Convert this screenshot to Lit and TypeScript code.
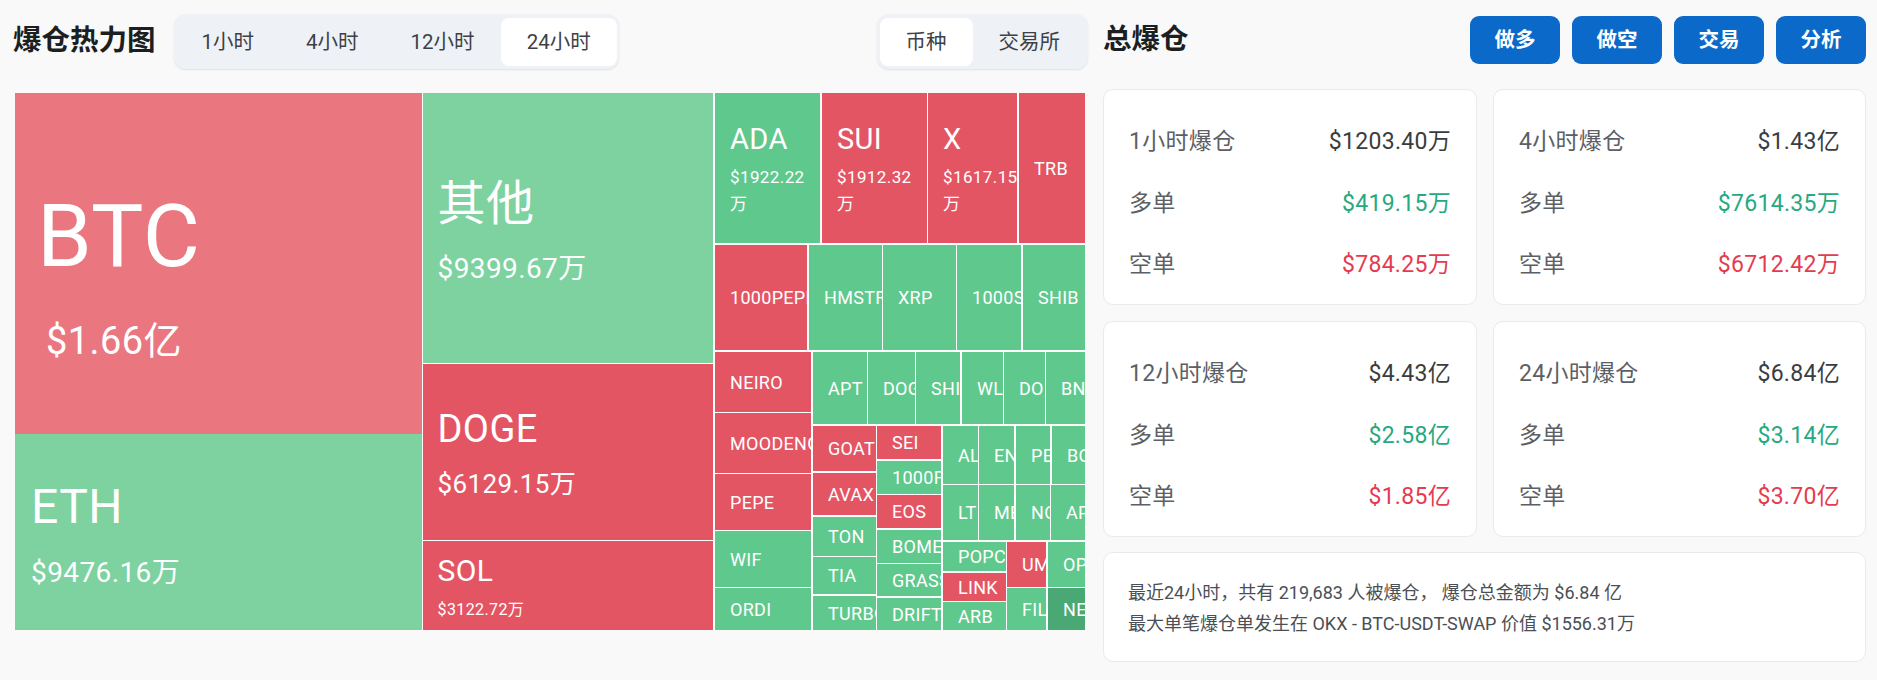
import { LitElement, html, css, nothing } from 'lit';
import { customElement } from 'lit/decorators.js';

const RED = '#e45564';
const GREEN = '#5fc88c';
const SOFT_RED = '#ea7680';
const SOFT_GREEN = '#7dd2a0';
const DARK_GREEN = '#4aa874';

interface Big {
  lf: number; // label font
  vf: number; // value font
  top: number; // label centre from the tile's top
  vtop: number; // value centre from the tile's top
  value: string;
  left?: number;
  vleft?: number;
  lh?: number;
}

interface Tile {
  name: string;
  size: number;
  gap: number;
  color: string;
  big?: Big;
}

interface Group {
  dir: 'row' | 'col';
  size: number;
  gap: number;
  items: Node[];
}

type Node = Tile | Group;

const t = (name: string, color: string, size: number, gap = 1, big?: Big): Tile => ({ name, color, size, gap, big });
const row = (size: number, gap: number, ...items: Node[]): Group => ({ dir: 'row', size, gap, items });
const col = (size: number, gap: number, ...items: Node[]): Group => ({ dir: 'col', size, gap, items });

const bigTile = (lf: number, vf: number, top: number, vtop: number, value: string, left = 15, vleft = left, lh = vf): Big => ({
  lf, vf, top, vtop, value, left, vleft, lh,
});

const TREE: Group = row(537, 0,
  col(406.5, 1,
    t('BTC', SOFT_RED, 341, 0, bigTile(88, 38, 143, 248, '$1.66亿', 22, 31)),
    t('ETH', SOFT_GREEN, 196, 0, bigTile(48, 28, 73, 139, '$9476.16万', 16, 16)),
  ),
  col(290.5, 2,
    t('其他', SOFT_GREEN, 270, 1, bigTile(48, 28, 111, 176, '$9399.67万')),
    t('DOGE', RED, 176, 1, bigTile(38, 26, 65, 120, '$6129.15万')),
    t('SOL', RED, 89, 0, bigTile(30, 16, 30, 69, '$3122.72万')),
  ),
  col(370, 0,
    row(150, 2,
      t('ADA', GREEN, 105, 2, bigTile(29, 17, 46, 84, '$1922.22万', 15, 15, 27)),
      t('SUI', RED, 105, 1, bigTile(29, 17, 46, 84, '$1912.32万', 15, 15, 27)),
      t('X', RED, 89, 2, bigTile(29, 17, 46, 84, '$1617.15万', 15, 15, 27)),
      t('TRB', RED, 66, 0),
    ),
    row(105, 2,
      t('1000PEPE', RED, 92, 2),
      t('HMSTR', GREEN, 73, 1),
      t('XRP', GREEN, 73, 1),
      t('1000S', GREEN, 64, 2),
      t('SHIB', GREEN, 62, 0),
    ),
    row(278, 0,
      col(96, 2,
        t('NEIRO', RED, 60),
        t('MOODENG', RED, 60),
        t('PEPE', RED, 56),
        t('WIF', GREEN, 56),
        t('ORDI', GREEN, 42, 0),
      ),
      col(272, 0,
        row(72, 2,
          t('APT', GREEN, 54),
          t('DOG', GREEN, 47),
          t('SHI', GREEN, 44, 2),
          t('WL', GREEN, 41),
          t('DO', GREEN, 41),
          t('BN', GREEN, 39, 0),
        ),
        row(204, 0,
          col(63, 1,
            t('GOAT', RED, 45, 2),
            t('AVAX', RED, 42, 2),
            t('TON', GREEN, 39),
            t('TIA', GREEN, 37, 2),
            t('TURBO', GREEN, 34, 0),
          ),
          col(64, 2,
            t('SEI', RED, 33, 2),
            t('1000F', GREEN, 33, 1),
            t('EOS', RED, 33, 2),
            t('BOME', GREEN, 33),
            t('GRASS', GREEN, 32, 2),
            t('DRIFT', GREEN, 32, 0),
          ),
          col(142, 0,
            row(58, 1,
              t('AL', GREEN, 35),
              t('EN', GREEN, 35, 2),
              t('PE', GREEN, 34, 2),
              t('BO', GREEN, 33, 0),
            ),
            row(55, 2,
              t('LT', GREEN, 35),
              t('ME', GREEN, 35, 2),
              t('NO', GREEN, 34),
              t('AP', GREEN, 34, 0),
            ),
            row(88, 0,
              col(63, 1,
                t('POPCAT', GREEN, 29, 2),
                t('LINK', RED, 28),
                t('ARB', GREEN, 28, 0),
              ),
              col(78, 0,
                row(45, 1,
                  t('UM', RED, 39, 2),
                  t('OP', GREEN, 37, 0),
                ),
                row(42, 0,
                  t('FIL', GREEN, 39, 2),
                  t('NE', DARK_GREEN, 37, 0),
                ),
              ),
            ),
          ),
        ),
      ),
    ),
  ),
);

const CARDS = [
  { title: '1小时爆仓', total: '$1203.40万', long: '$419.15万', short: '$784.25万' },
  { title: '4小时爆仓', total: '$1.43亿', long: '$7614.35万', short: '$6712.42万' },
  { title: '12小时爆仓', total: '$4.43亿', long: '$2.58亿', short: '$1.85亿' },
  { title: '24小时爆仓', total: '$6.84亿', long: '$3.14亿', short: '$3.70亿' },
];

@customElement('app-root')
export class AppRoot extends LitElement {
  static styles = css`
    :host {
      display: block;
      height: 680px;
      overflow: hidden;
      background: #f9f9fa;
      color: #1c1f22;
      font-family: 'Roboto', 'Noto Sans CJK SC', sans-serif;
    }

    .page {
      display: grid;
      grid-template-columns: 1074px 763px;
      column-gap: 16px;
      padding-left: 13px;
    }

    .head {
      display: flex;
      align-items: center;
      height: 55px;
      margin: 14px 0 24px;
    }

    .title {
      margin: 0;
      font-size: 28.5px;
      font-weight: 700;
      line-height: 1;
    }

    .tabs {
      display: flex;
      margin-left: 18px;
      padding: 4px 2px 3px;
      background: #eef1f5;
      border-radius: 12px;
      box-shadow: 0 1px 2px rgba(0, 0, 0, 0.1);
    }

    .tabs.end {
      margin-left: auto;
      margin-right: -1px;
      padding-left: 3px;
    }

    .tab {
      padding: 0 26px;
      font-size: 20.5px;
      line-height: 48px;
      color: #3d4147;
      border-radius: 8px;
    }

    .tab.on {
      background: #fff;
    }

    .map {
      margin-left: 2px;
      width: 1070px;
      height: 537px;
      background: #fff;
    }

    .group {
      display: flex;
    }

    .group.col {
      flex-direction: column;
    }

    .tile {
      display: flex;
      align-items: center;
      padding: 0 0 0 15px;
      box-sizing: border-box;
      overflow: hidden;
      color: #fff;
      font-size: 18px;
      letter-spacing: 0.3px;
      white-space: nowrap;
    }

    .tile.big {
      display: block;
      padding: 0 3px 0 0;
      white-space: normal;
      letter-spacing: 0.4px;
    }

    .big-label,
    .big-value {
      display: block;
      line-height: 1;
    }

    .side-head {
      display: flex;
      align-items: center;
      justify-content: space-between;
      height: 48px;
      margin: 16px 0 25px;
    }

    .side-head .title {
      font-size: 28.5px;
    }

    .buttons {
      display: flex;
      gap: 12px;
    }

    .btn {
      width: 90px;
      font-size: 20.5px;
      font-weight: 700;
      line-height: 48px;
      text-align: center;
      color: #fff;
      background: #0b69c9;
      border-radius: 9px;
    }

    .cards {
      display: grid;
      grid-template-columns: 374px 373px;
      gap: 16px;
    }

    .card {
      box-sizing: border-box;
      height: 216px;
      padding: 36px 25px 0;
      display: flex;
      flex-direction: column;
      gap: 30px;
      background: #fff;
      border: 1px solid #e8eaed;
      border-radius: 10px;
    }

    .line {
      display: flex;
      justify-content: space-between;
      font-size: 23px;
      line-height: 31.5px;
      color: #5c6066;
      letter-spacing: 0.3px;
    }

    .total {
      color: #3a3d40;
    }

    .long {
      color: #26a97f;
    }

    .short {
      color: #e63b4f;
    }

    .note {
      grid-column: 1 / 3;
      box-sizing: border-box;
      height: 110px;
      margin-top: -1px;
      padding: 24px 24px 0;
      font-size: 18px;
      line-height: 31px;
      color: #4b4f55;
      background: #fff;
      border: 1px solid #e8eaed;
      border-radius: 10px;
    }

    .sheet {
      position: relative;
      margin: 48px 11px 0 20px;
      height: 40px;
      border-top: 2px solid #e6e8eb;
      background: #fff;
    }

    .sheet::after {
      content: '';
      position: absolute;
      right: 6px;
      top: -5px;
      width: 46px;
      height: 20px;
      background: #eaf1f8;
      border-radius: 23px 23px 0 0;
    }
  `;

  private renderNode(node: Node, axis: 'row' | 'col'): unknown {
    const main = axis === 'row' ? 'width' : 'height';
    const margin = axis === 'row' ? 'margin-right' : 'margin-bottom';
    const box = `flex:0 0 ${node.size}px;${main}:${node.size}px;${margin}:${node.gap}px`;
    if ('items' in node) {
      return html`<div class="group ${node.dir}" style=${box}>
        ${node.items.map((item) => this.renderNode(item, node.dir))}
      </div>`;
    }
    return this.renderTile(node, box);
  }

  private renderTile(tile: Tile, box: string) {
    const big = tile.big;
    const style = `${box};background:${tile.color}`;
    if (!big) {
      return html`<div class="tile" style=${style}>${tile.name}</div>`;
    }
    const gap = big.vtop - big.top - big.lf / 2 - (big.lh ?? big.vf) / 2;
    return html`<div class="tile big" style=${style}>
      <span
        class="big-label"
        style="font-size:${big.lf}px;padding:${big.top - big.lf / 2}px 0 0 ${big.left}px"
      >${tile.name}</span>
      <span
        class="big-value"
        style="font-size:${big.vf}px;line-height:${big.lh}px;padding:${gap}px 0 0 ${big.vleft}px"
      >${big.value}</span>
    </div>`;
  }

  private renderCard(card: (typeof CARDS)[number]) {
    return html`<div class="card">
      <div class="line"><span>${card.title}</span><span class="total">${card.total}</span></div>
      <div class="line"><span>多单</span><span class="long">${card.long}</span></div>
      <div class="line"><span>空单</span><span class="short">${card.short}</span></div>
    </div>`;
  }

  render() {
    return html`
      <div class="page">
        <section>
          <div class="head">
            <h2 class="title">爆仓热力图</h2>
            <div class="tabs">
              <span class="tab">1小时</span>
              <span class="tab">4小时</span>
              <span class="tab">12小时</span>
              <span class="tab on">24小时</span>
            </div>
            <div class="tabs end">
              <span class="tab on">币种</span>
              <span class="tab">交易所</span>
            </div>
          </div>
          <div class="map">${this.renderNode(TREE, 'col')}</div>
        </section>
        <section>
          <div class="side-head">
            <h2 class="title">总爆仓</h2>
            <div class="buttons">
              <span class="btn">做多</span>
              <span class="btn">做空</span>
              <span class="btn">交易</span>
              <span class="btn">分析</span>
            </div>
          </div>
          <div class="cards">
            ${CARDS.map((card) => this.renderCard(card))}
            <div class="note">
              最近24小时，共有 219,683 人被爆仓， 爆仓总金额为 $6.84 亿<br />
              最大单笔爆仓单发生在 OKX - BTC-USDT-SWAP 价值 $1556.31万
            </div>
          </div>
        </section>
      </div>
      <div class="sheet">${nothing}</div>
    `;
  }
}
